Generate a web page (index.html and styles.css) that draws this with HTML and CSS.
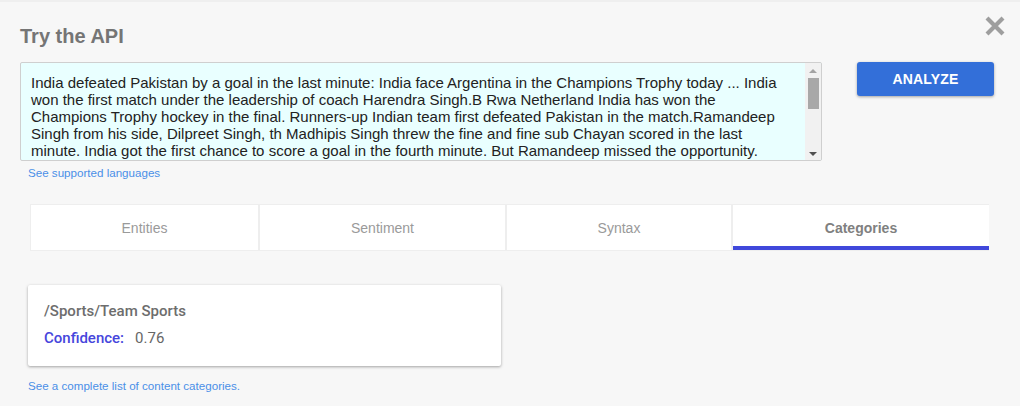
FILE: index.html
```html
<!DOCTYPE html>
<html>
<head>
<meta charset="utf-8">
<link rel="stylesheet" href="styles.css">
</head>
<body>
<div class="page">
  <div class="header">
    <h1 class="title">Try the API</h1>
    <button class="close" aria-label="Close">
      <svg width="22" height="22" viewBox="0 0 22 22"><path d="M3 3 L19 19 M19 3 L3 19" stroke="#9e9e9e" stroke-width="4.2" stroke-linecap="butt"/></svg>
    </button>
  </div>
  <div class="input-row">
    <div class="input-col">
      <div class="textbox">
        <div class="text">India defeated Pakistan by a goal in the last minute: India face Argentina in the Champions Trophy today ... India won the first match under the leadership of coach Harendra Singh.B Rwa Netherland India has won the Champions Trophy hockey in the final. Runners-up Indian team first defeated Pakistan in the match.Ramandeep Singh from his side, Dilpreet Singh, th Madhipis Singh threw the fine and fine sub Chayan scored in the last minute. India got the first chance to score a goal in the fourth minute. But Ramandeep missed the opportunity.</div>
        <div class="scrollbar">
          <span class="arrow up"></span>
          <span class="track"><span class="thumb"></span></span>
          <span class="arrow down"></span>
        </div>
      </div>
      <a class="link" href="#">See supported languages</a>
    </div>
    <button class="analyze">ANALYZE</button>
  </div>
  <div class="tabs">
    <div class="tab">Entities</div>
    <div class="tab">Sentiment</div>
    <div class="tab">Syntax</div>
    <div class="tab active">Categories</div>
  </div>
  <div class="card">
    <div class="cat">/Sports/Team Sports</div>
    <div class="conf"><span class="conf-label">Confidence:</span><span class="conf-val">0.76</span></div>
  </div>
  <a class="link link-bottom" href="#">See a complete list of content categories.</a>
</div>
</body>
</html>
```
FILE: styles.css
```css
html, body {
  margin: 0;
  padding: 0;
  background: #f7f7f7;
  font-family: "Liberation Sans", Arial, sans-serif;
}
body {
  border-top: 2px solid #efefef;
  height: 404px;
  overflow: hidden;
}
.page {
  padding: 0 20px 0 20px;
}
.header {
  display: flex;
  justify-content: space-between;
  align-items: flex-start;
}
.title {
  margin: 23px 0 0 0;
  font-size: 20px;
  font-weight: bold;
  color: #757575;
  line-height: 22px;
}
.close {
  margin: 13px -6px 0 0;
  padding: 0;
  border: 0;
  background: transparent;
  width: 22px;
  height: 22px;
}
.close svg { display: block; }
.input-row {
  display: flex;
  align-items: flex-start;
  margin-top: 15px;
}
.input-col {
  display: flex;
  flex-direction: column;
  width: 802px;
}
.textbox {
  box-sizing: border-box;
  width: 802px;
  height: 99px;
  display: flex;
  border: 1px solid #cfcfcf;
  border-radius: 2px;
  background: #e9ffff;
  overflow: hidden;
}
.text {
  flex: 1;
  padding: 11px 10px 0 10px;
  font-size: 15px;
  line-height: 17px;
  color: #222;
  overflow: hidden;
}
.scrollbar {
  width: 16px;
  flex: none;
  background: #f1f1f1;
  display: flex;
  flex-direction: column;
  align-items: center;
}
.arrow {
  width: 0;
  height: 0;
  border-left: 4px solid transparent;
  border-right: 4px solid transparent;
  flex: none;
}
.arrow.up {
  margin-top: 6px;
  border-bottom: 4px solid #a3a3a3;
}
.arrow.down {
  margin-bottom: 4px;
  border-top: 4px solid #505050;
}
.track {
  flex: 1;
  width: 100%;
  display: flex;
  justify-content: center;
  padding-top: 5px;
}
.thumb {
  width: 11px;
  height: 31px;
  background: #a8a8a8;
}
.link {
  font-size: 11.6px;
  color: #4a8fe7;
  text-decoration: none;
  line-height: 13px;
}
.input-col .link {
  margin: 5px 0 0 8px;
}
.analyze {
  margin-left: 35px;
  width: 137px;
  height: 34px;
  border: 0;
  border-radius: 3px;
  background: #336fd9;
  color: #fff;
  font-family: "Liberation Sans", Arial, sans-serif;
  font-weight: bold;
  font-size: 14px;
  box-shadow: 0 1px 3px rgba(0,0,0,0.35);
  letter-spacing: 0.2px;
}
.tabs {
  display: grid;
  grid-template-columns: 229px 247px 226px 256px;
  margin: 25px 12px 0 10px;
  width: 959px;
  background: #eeeeee;
  padding: 1px 1px 1px 1px;
  box-sizing: border-box;
}
.tab {
  background: #fff;
  height: 45px;
  display: flex;
  align-items: center;
  justify-content: center;
  font-size: 14px;
  color: #9a9a9a;
  margin-right: 2px;
  box-sizing: border-box;
}
.tab:last-child { margin-right: 0; }
.tab.active {
  font-weight: bold;
  color: #808080;
  border-bottom: 4px solid #4048db;
  padding-top: 4px;
}
.card {
  margin: 34px 0 0 8px;
  width: 473px;
  height: 81px;
  box-sizing: border-box;
  background: #fff;
  border-radius: 2px;
  box-shadow: 0 1px 3px rgba(0,0,0,0.35);
  padding: 17px 16px 0 16px;
  font-family: Roboto, "Liberation Sans", sans-serif;
}
.cat {
  font-size: 15px;
  font-weight: 500;
  color: #6d6d6d;
  line-height: 18px;
}
.conf {
  margin-top: 9px;
  font-size: 15px;
  line-height: 18px;
}
.conf-label {
  color: #4646dc;
  font-weight: 500;
  margin-right: 11px;
}
.conf-val {
  color: #666;
}
.link-bottom {
  display: block;
  margin: 13px 0 0 8px;
}
```
